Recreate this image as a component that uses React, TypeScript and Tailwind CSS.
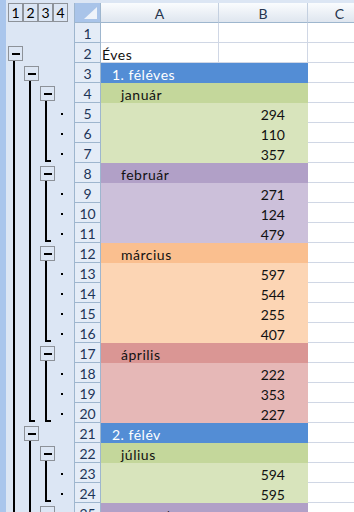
import React from "react";

type Mark = "box" | "line" | "end" | null;

type SheetRow = {
  n: number;
  a?: string;
  b?: string;
  fill?: string;
  textColor?: string;
  indent?: string;
  marks: Mark[];
  dot?: boolean;
};

const group = (
  start: number,
  name: string,
  hdr: string,
  det: string,
  vals: string[],
  lastL2: Mark = "line"
): SheetRow[] => {
  const out: SheetRow[] = [
    { n: start, a: name, fill: hdr, indent: "pl-[20px]", marks: ["line", "line", "box"] },
  ];
  vals.forEach((v, i) => {
    const last = i === vals.length - 1;
    out.push({
      n: start + i + 1,
      b: v,
      fill: det,
      marks: ["line", last ? lastL2 : "line", last ? "end" : "line"],
      dot: true,
    });
  });
  return out;
};

const rows: SheetRow[] = [
  { n: 1, marks: [null, null, null] },
  { n: 2, a: "Éves", indent: "pl-[1px]", marks: ["box", null, null] },
  { n: 3, a: "1. féléves", fill: "bg-[#538dd5]", textColor: "text-white", indent: "pl-[11px]", marks: ["line", "box", null] },
  ...group(4, "január", "bg-[#c4d79b]", "bg-[#d8e4bc]", ["294", "110", "357"]),
  ...group(8, "február", "bg-[#b1a0c7]", "bg-[#ccc0da]", ["271", "124", "479"]),
  ...group(12, "március", "bg-[#fabf8f]", "bg-[#fcd5b4]", ["597", "544", "255", "407"]),
  ...group(17, "április", "bg-[#da9694]", "bg-[#e6b8b7]", ["222", "353", "227"], "end"),
  { n: 21, a: "2. félév", fill: "bg-[#538dd5]", textColor: "text-white", indent: "pl-[11px]", marks: ["line", "box", null] },
  ...group(22, "július", "bg-[#c4d79b]", "bg-[#d8e4bc]", ["594", "595"]),
  { n: 25, a: "augusztus", fill: "bg-[#b1a0c7]", indent: "pl-[20px]", marks: ["line", "line", "box"] },
];

// outline brackets for one row
const Outline = ({ marks, dot }: { marks: Mark[]; dot?: boolean }) => (
  <svg width="68" height="20" className="block shrink-0">
    {marks.map((m, i) => {
      const x = 16 * i;
      if (m === "line") return <rect key={i} x={x + 7} y={0} width={2} height={20} fill="#000" />;
      if (m === "end")
        return (
          <g key={i} fill="#000">
            <rect x={x + 7} y={0} width={2} height={19} />
            <rect x={x + 7} y={17} width={6} height={2} />
          </g>
        );
      if (m === "box")
        return (
          <g key={i}>
            <rect x={x + 2.5} y={3.5} width={14} height={14} fill="#dce6f4" stroke="#8d9299" />
            <rect x={x + 6} y={10} width={8} height={2} fill="#000" />
            <rect x={x + 7} y={18} width={2} height={2} fill="#000" />
          </g>
        );
      return null;
    })}
    {dot && <rect x={55} y={10} width={2} height={2} fill="#000" />}
  </svg>
);

const App: React.FC = () => {
  return (
    <div className="flex h-[512px] w-[354px] overflow-hidden bg-[#dce6f4] font-[Lato,'Liberation_Sans',sans-serif] text-[14px] text-[#111]">
      <div className="w-[6px] shrink-0 bg-[#aac6ec]" />
      <div className="flex flex-1 flex-col min-w-0">
        {/* column headers */}
        <div className="flex h-[23px] shrink-0 pt-[3px]">
          <div className="flex w-[68px] shrink-0 pl-[2px]">
            {["1", "2", "3", "4"].map((l) => (
              <div key={l} className="flex h-[19px] w-[15px] items-center justify-center border border-[#8d9299] pt-[1px] text-[14px] leading-none text-black">
                {l}
              </div>
            ))}
          </div>
          <div className="relative w-[27px] shrink-0 border-b border-l border-r border-[#9eb6ce] bg-[#a9c4e9]">
            <div className="absolute bottom-[3px] right-[3px] h-0 w-0 border-b-[12px] border-l-[13px] border-b-[#eef3fa] border-l-transparent" />
          </div>
          {[
            ["A", "w-[118px]"],
            ["B", "w-[89px]"],
            ["C", "w-[64px]"],
          ].map(([c, w]) => (
            <div key={c} className={`${w} flex shrink-0 items-center justify-center border-b border-r border-b-[#9eb6ce] border-r-[#c4d0e0] bg-gradient-to-b from-[#fafcfe] to-[#dfe6ef] pt-[2px] text-[#26344d]`}>
              {c}
            </div>
          ))}
        </div>

        {rows.map((r) => (
          <div key={r.n} className="flex h-[20px] shrink-0">
            <Outline marks={r.marks} dot={r.dot} />
            <div className="flex w-[27px] shrink-0 items-center justify-center border-b border-l border-r border-[#9eb6ce] bg-[#e4ecf7] pt-[2px] text-[#1e3558]">
              {r.n}
            </div>
            {r.fill ? (
              <div className={`flex w-[207px] shrink-0 items-center justify-between pt-[3px] ${r.fill} ${r.textColor ?? ""}`}>
                <span className={`${r.indent} tracking-[0.5px]`}>{r.a}</span>
                <span className="pr-[23px]">{r.b}</span>
              </div>
            ) : (
              <>
                <div className={`flex w-[118px] shrink-0 items-center whitespace-nowrap border-b border-r border-[#d0d7e5] bg-white pt-[3px] tracking-[0.5px] ${r.indent ?? ""}`}>
                  {r.a}
                </div>
                <div className="w-[89px] shrink-0 border-b border-r border-[#d0d7e5] bg-white" />
              </>
            )}
            <div className="w-[64px] shrink-0 border-b border-r border-[#d0d7e5] bg-white" />
          </div>
        ))}
      </div>
    </div>
  );
};

export default App;
